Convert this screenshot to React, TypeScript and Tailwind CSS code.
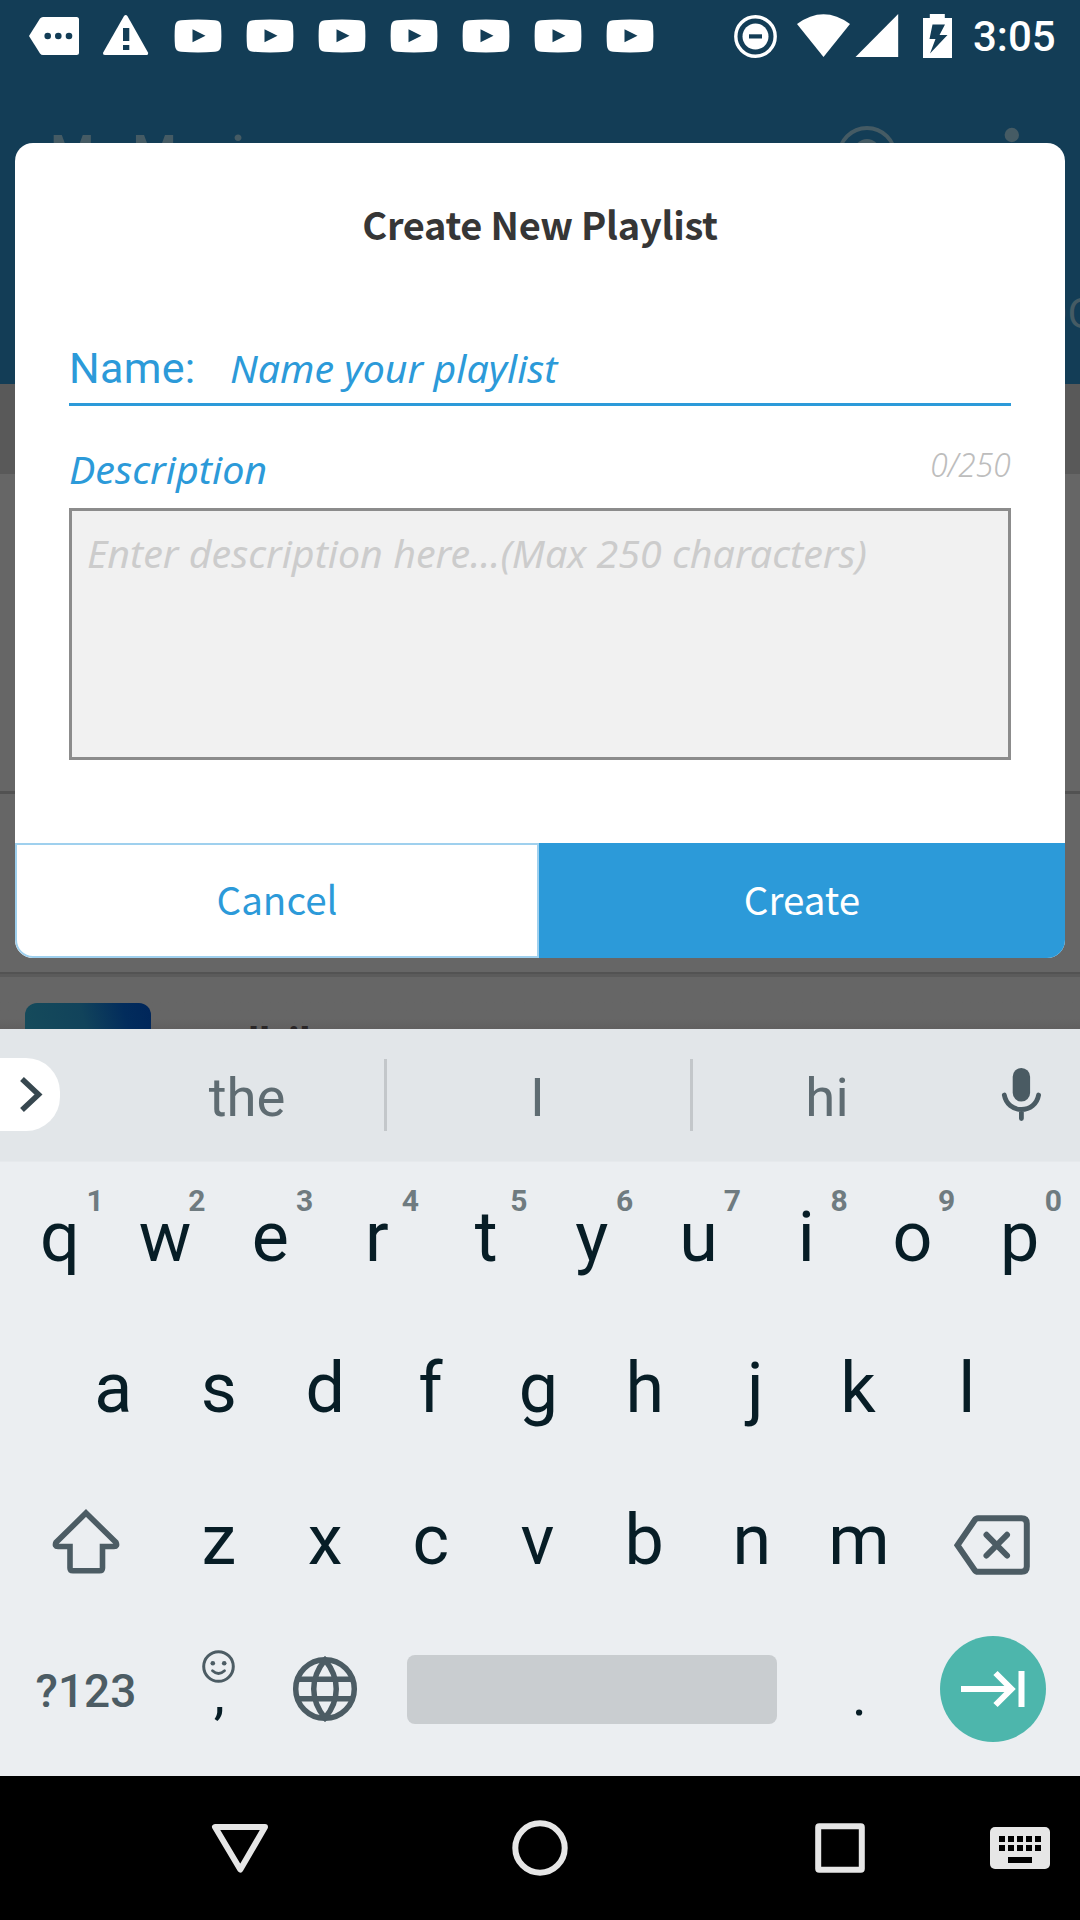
import React from "react";

type IconProps = { box: string; className: string; children: React.ReactNode };

function Icon({ box, className, children }: IconProps) {
  return (
    <svg viewBox={box} className={`shrink-0 ${className}`} aria-hidden="true">
      {children}
    </svg>
  );
}

function VideoIcon() {
  return (
    <Icon box="0 0 48 34" className="mr-[24px] h-[34px] w-[48px]">
      <path
        fill="#fff"
        d="M7 1.2Q24 -.2 41 1.2Q46.500 1.500 47 7Q47.800 17 47 27Q46.500 32.500 41 32.800Q24 34 7 32.800Q1.500 32.500 1 27Q.2 17 1 7Q1.500 1.500 7 1.200Z"
      />
      <path fill="#133d56" d="M18.500 10.300L31.500 16.800L18.500 23.300Z" />
    </Icon>
  );
}

function StatusBar() {
  return (
    <div className="flex h-[72px] w-full items-start">
      <Icon box="28 0 52 72" className="ml-[28px] h-[72px] w-[52px]">
        <path fill="#fff" d="M29 36L40 18.500Q41.200 17 43 17H76.500Q79 17 79 19.500V52.500Q79 55 76.500 55H43Q41.200 55 40 53.500Z" />
        <g fill="#133d56">
          <circle cx="47.700" cy="36" r="3.300" />
          <circle cx="58.300" cy="36" r="3.300" />
          <circle cx="69" cy="36" r="3.300" />
        </g>
      </Icon>
      <Icon box="102 0 48 72" className="ml-[22px] mr-[24px] h-[72px] w-[48px]">
        <path fill="#fff" d="M124 16Q125.700 14 127.400 16L148 52.500Q148.600 55 146.500 55H105Q102.500 55 103.200 52.500Z" />
        <path fill="#133d56" d="M123 28H129.300V41H123ZM123 45H129.300V50H123Z" />
      </Icon>
      <div className="flex pt-[19px]">
        {[0, 1, 2, 3, 4, 5, 6].map((n) => (
          <VideoIcon key={n} />
        ))}
      </div>
      <Icon box="732 0 222 72" className="ml-[54px] h-[72px] w-[222px]">
        <circle cx="755.500" cy="36.500" r="19.700" fill="none" stroke="#fff" strokeWidth="3.400" />
        <circle cx="755.500" cy="36.500" r="13" fill="#fff" />
        <path fill="#133d56" d="M749 34.300H762V38.500H749Z" />
        <path fill="#fff" d="M797 24Q823.500 4.500 850 24L823.500 57Z" />
        <path fill="#fff" d="M898.200 14V57H855.500Z" />
        <path fill="#fff" d="M929.800 14H944.800V18H952V58H923V18H929.800Z" />
        <path fill="#133d56" d="M932.500 24.500H945L939.500 35H947.500L930 53.500L935.500 39H929.500Z" />
      </Icon>
      <span className="ml-[19px] pt-[12px] text-[42px] font-medium leading-[50px] text-white">3:05</span>
    </div>
  );
}

function LibraryBackdrop() {
  return (
    <div className="flex h-full w-full flex-col">
      <div className="h-[384px] w-full overflow-hidden bg-[#133d56]">
        <StatusBar />
        <div className="flex h-[168px] items-start text-[#455b64]">
          <span className="ml-[50px] mt-[53px] w-[769px] text-[51px] font-medium leading-[60px]">My Music</span>
          <Icon box="835 124 64 64" className="ml-[16px] mt-[52px] h-[64px] w-[64px]">
            <circle cx="867" cy="156" r="28" fill="none" stroke="#455b64" strokeWidth="4" />
            <circle cx="867" cy="152" r="13" fill="#455b64" />
          </Icon>
          <Icon box="1000 124 24 64" className="ml-[101px] mt-[52px] h-[64px] w-[24px]">
            <circle cx="1011.800" cy="135" r="7.200" fill="#455b64" />
            <circle cx="1011.800" cy="155" r="7.200" fill="#455b64" />
            <circle cx="1011.800" cy="175" r="7.200" fill="#455b64" />
          </Icon>
        </div>
        <div className="flex h-[144px] items-center whitespace-nowrap pl-[1040px] pt-[3px] text-[42px] text-[#455b64]">
          DOWNLOADS
        </div>
      </div>
      <div className="h-[90px] bg-[#595959]" />
      <div className="h-[317px] bg-[#666]" />
      <div className="h-[3px] bg-[#525252]" />
      <div className="h-[178px] bg-[#666]" />
      <div className="h-[2px] bg-[#535353]" />
      <div className="h-[3px] bg-[#5b5b5b]" />
      <div className="flex h-[52px] overflow-hidden bg-gradient-to-b from-[#666] from-80% to-[#605f5f] pt-[26px]">
        <div className="ml-[25px] h-[126px] w-[126px] shrink-0 rounded-[12px] bg-[linear-gradient(75deg,#174e5b_0%,#11435b_55%,#022c5c_82%,#00265a_100%)]" />
        <div className="ml-[97px] mt-[16px] flex gap-[18px] text-[42px] font-bold leading-[50px] text-[#2a2626]">
          <span>ll</span>
          <span>il</span>
        </div>
      </div>
    </div>
  );
}

function PlaylistDialog() {
  return (
    <div className="absolute left-[15px] top-[143px] flex h-[815px] w-[1050px] flex-col overflow-hidden rounded-[18px] bg-white font-['Noto_Sans_CJK_SC',sans-serif] text-[#2c9ad9]">
      <h1 className="mt-[53px] text-center text-[38px] font-bold leading-[56px] tracking-[-0.3px] text-[#363636]">
        Create New Playlist
      </h1>
      <div className="mx-[54px] mt-[88px] flex h-[66px] items-start border-b-[3px] border-[#2c9ad9]">
        <label className="w-[161px] font-[Roboto] text-[43px] leading-[56px] tracking-[0.3px]">Name:</label>
        <span className="origin-left scale-x-[1.008] whitespace-nowrap font-['Noto_Sans'] text-[39px] italic leading-[56px]">
          Name your playlist
        </span>
      </div>
      <div className="mx-[54px] flex h-[102px] items-start justify-between font-['Noto_Sans'] italic">
        <span className="mt-[35px] origin-left scale-x-[1.013] text-[39px] leading-[56px]">Description</span>
        <span className="mt-[31px] origin-right scale-x-[0.96] text-[33px] font-light leading-[56px] text-[#bdbdbd]">0/250</span>
      </div>
      <div className="mx-[54px] h-[252px] border-[3px] border-[#8c8c8c] bg-[#f1f1f1] pl-[15px] pt-[14px]">
        <span className="block origin-left scale-x-[1.01] whitespace-nowrap font-['Noto_Sans'] text-[39px] italic leading-[56px] text-[#ccc]">
          Enter description here...(Max 250 characters)
        </span>
      </div>
      <div className="mt-auto flex h-[115px] text-[38.6px]">
        <button className="w-[524px] rounded-bl-[18px] border-2 border-[#9fd0ee] pb-[4px]">Cancel</button>
        <button className="flex-1 bg-[#2c9ad9] pb-[4px] text-white">Create</button>
      </div>
    </div>
  );
}

function SuggestionBar() {
  return (
    <div className="flex h-[132px] items-center bg-[#e2e6e9] text-[54.5px] text-[#5f6c72]">
      <div className="mb-[2px] h-[73px] w-[60px] rounded-r-[34px] bg-white">
        <Icon box="0 1058 60 73" className="h-[73px] w-[60px]">
          <path d="M22 1079L38.500 1094.500L22 1110" fill="none" stroke="#37474f" strokeWidth="5.500" />
        </Icon>
      </div>
      <span className="ml-[50px] w-[274px] pt-[5px] text-center">the</span>
      <div className="h-[72px] w-[3px] bg-[#c3c7ca]" />
      <span className="w-[303px] pr-[2px] pt-[5px] text-center">I</span>
      <div className="h-[72px] w-[3px] bg-[#c3c7ca]" />
      <span className="w-[268px] pt-[5px] text-center">hi</span>
      <Icon box="996 1060 50 68" className="mb-[2px] ml-[35px] h-[68px] w-[50px]">
        <rect x="1012.700" y="1068" width="17.400" height="33.500" rx="8.700" fill="#4a5b63" />
        <path
          d="M1004.300 1095C1006 1104 1013 1109.500 1021.400 1109.500C1030 1109.500 1037 1104 1038.600 1095M1021.400 1109.500V1118.500"
          fill="none"
          stroke="#4a5b63"
          strokeWidth="4.800"
          strokeLinecap="round"
        />
      </Icon>
    </div>
  );
}

type KeyProps = { label: string; inset?: string; hint?: string; hintShift?: string };

function LetterKey({ label, inset = "", hint, hintShift = "right-0" }: KeyProps) {
  return (
    <div className={`relative flex h-full w-[106.7px] shrink-0 items-center justify-center ${inset}`}>
      <span>{label}</span>
      {hint && (
        <span
          className={`absolute top-[19px] w-[41px] text-center text-[30px] font-bold leading-[40px] text-[#6f7b80] ${hintShift}`}
        >
          {hint}
        </span>
      )}
    </div>
  );
}

const topRow: KeyProps[] = [
  { label: "q", hint: "1", inset: "pl-[3px]", hintShift: "-right-[4px]" },
  { label: "w", hint: "2", hintShift: "right-[1px]" },
  { label: "e", hint: "3", inset: "pr-[3px]" },
  { label: "r", hint: "4", inset: "pr-[3px]", hintShift: "right-[1px]" },
  { label: "t", hint: "5", inset: "pl-[2px]", hintShift: "-right-[1px]" },
  { label: "y", hint: "6" },
  { label: "u", hint: "7", hintShift: "-right-[1px]" },
  { label: "i", hint: "8", inset: "pl-[2px]", hintShift: "-right-[1px]" },
  { label: "o", hint: "9", inset: "pl-[1px]", hintShift: "-right-[2px]" },
  { label: "p", hint: "0", inset: "pl-[2px]", hintShift: "-right-[2px]" },
];

const homeRow: KeyProps[] = [
  { label: "a" },
  { label: "s", inset: "pr-[2px]" },
  { label: "d", inset: "pr-[3px]" },
  { label: "f", inset: "pr-[6px]" },
  { label: "g", inset: "pr-[3px]" },
  { label: "h", inset: "pr-[4px]" },
  { label: "j", inset: "pl-[4px]" },
  { label: "k", inset: "pr-[4px]" },
  { label: "l" },
];

const lowerRow: KeyProps[] = [
  { label: "z", inset: "pl-[1px]" },
  { label: "x" },
  { label: "c", inset: "pr-[2px]" },
  { label: "v", inset: "pr-[2px]" },
  { label: "b", inset: "pr-[2px]" },
  { label: "n" },
  { label: "m", inset: "pl-[1px]" },
];

function Keyboard() {
  return (
    <div className="h-[615px] border-t border-[#e6e9ec] bg-[#ebeef1] text-[70px] leading-none text-[#071d26]">
      <div className="flex h-[150px] px-[5px]">
        {topRow.map((k) => (
          <LetterKey key={k.label} {...k} />
        ))}
      </div>
      <div className="flex h-[152px] justify-center">
        {homeRow.map((k) => (
          <LetterKey key={k.label} {...k} />
        ))}
      </div>
      <div className="flex h-[151px] px-[5px]">
        <Icon box="5 1464 160 151" className="h-[151px] w-[160px]">
          <path
            d="M86 1513L116 1542.500Q117.800 1546.500 114 1546.500H102.500V1568Q102.500 1570.800 99.500 1570.800H73Q70 1570.800 70 1568V1546.500H58Q54.200 1546.500 56 1542.500Z"
            fill="none"
            stroke="#4c5c64"
            strokeWidth="5.600"
          />
        </Icon>
        {lowerRow.map((k) => (
          <LetterKey key={k.label} {...k} />
        ))}
        <Icon box="912 1464 163 151" className="h-[151px] w-[163px]">
          <g fill="none" stroke="#4c5c64" strokeWidth="6">
            <path d="M957.500 1545.300L974.500 1520.500Q975.800 1518.300 978 1518.300H1021.500Q1026.800 1518.300 1026.800 1523.500V1566.500Q1026.800 1571.800 1021.500 1571.800H978Q975.800 1571.800 974.500 1569.800Z" />
            <path strokeLinecap="round" d="M986.500 1534.800L1007 1555.500M1007 1534.800L986.500 1555.500" />
          </g>
        </Icon>
      </div>
      <div className="flex h-[151px] px-[5px]">
        <div className="flex w-[160px] items-center justify-center pl-[2px] text-[46px] font-medium text-[#4c5c64]">?123</div>
        <div className="flex w-[106.7px] flex-col items-center">
          <Icon box="200 1648 37 37" className="mt-[33px] h-[37px] w-[37px]">
            <circle cx="218.500" cy="1666.500" r="14.800" fill="none" stroke="#4c5c64" strokeWidth="3" />
            <circle cx="212.800" cy="1663.300" r="2.300" fill="#4c5c64" />
            <circle cx="224.200" cy="1663.300" r="2.300" fill="#4c5c64" />
            <path d="M212.500 1670.800Q218.500 1676.300 224.500 1670.800" fill="none" stroke="#4c5c64" strokeWidth="2.800" strokeLinecap="round" />
          </Icon>
          <span className="-mt-[21px] pl-[2px] text-[56px] leading-[60px]">,</span>
        </div>
        <div className="flex w-[106.7px] justify-center">
          <Icon box="290 1654 70 70" className="mt-[39px] h-[70px] w-[70px]">
            <g fill="none" stroke="#4c5c64" strokeWidth="5.500">
              <circle cx="325" cy="1689" r="29.300" />
              <path d="M298.500 1679.300H351.500M298.500 1698.700H351.500" />
              <path d="M325 1660C310 1678 310 1700 325 1718C340 1700 340 1678 325 1660Z" />
            </g>
          </Icon>
        </div>
        <div className="flex w-[426.600px] justify-center">
          <div className="mt-[40px] h-[69px] w-[370px] rounded-[8px] bg-[#c9cdd0]" />
        </div>
        <div className="flex w-[106.7px] justify-center">
          <span className="mt-[51px] pl-[2px] text-[56px] leading-[60px]">.</span>
        </div>
        <div className="flex flex-1 justify-center">
          <div className="mt-[21px] h-[106px] w-[106px] rounded-full bg-[#4db6ac]">
            <Icon box="940 1636 106 106" className="h-[106px] w-[106px]">
              <path d="M961 1689H1010M995.500 1673L1011.500 1689L995.500 1705M1021.500 1671V1707" fill="none" stroke="#fff" strokeWidth="6" />
            </Icon>
          </div>
        </div>
      </div>
    </div>
  );
}

function NavigationBar() {
  return (
    <div className="flex h-[144px] items-center bg-black">
      <Icon box="208 1816 64 64" className="ml-[208px] h-[64px] w-[64px]">
        <path d="M215 1827H265L240.300 1869.500Z" fill="none" stroke="#e6e6e6" strokeWidth="6" strokeLinejoin="round" />
      </Icon>
      <Icon box="508 1816 64 64" className="ml-[236px] h-[64px] w-[64px]">
        <circle cx="540" cy="1848" r="24.700" fill="none" stroke="#e6e6e6" strokeWidth="6" />
      </Icon>
      <Icon box="808 1816 64 64" className="ml-[236px] h-[64px] w-[64px]">
        <rect x="818.200" y="1826.200" width="43.600" height="43.600" rx="1" fill="none" stroke="#e6e6e6" strokeWidth="6" strokeLinejoin="round" />
      </Icon>
      <Icon box="988 1816 64 64" className="ml-[116px] h-[64px] w-[64px]">
        <rect x="990" y="1827" width="60" height="42" rx="5" fill="#e6e6e6" />
        {[0, 1, 2, 3, 4].map((n) => (
          <path key={n} transform={`translate(${n * 9} 0)`} d="M999 1836H1005V1842H999ZM999 1845H1005V1851H999Z" />
        ))}
        <path d="M1008 1857H1032V1863H1008Z" />
      </Icon>
    </div>
  );
}

export default function App() {
  return (
    <div className="flex h-[1920px] w-[1080px] flex-col overflow-hidden font-[Roboto,sans-serif]">
      <div className="relative h-[1029px]">
        <LibraryBackdrop />
        <PlaylistDialog />
      </div>
      <SuggestionBar />
      <Keyboard />
      <NavigationBar />
    </div>
  );
}
